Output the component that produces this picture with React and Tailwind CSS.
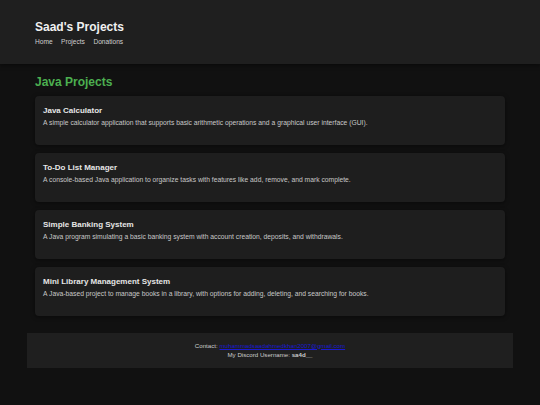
import React from "react";

const projects = [
  {
    title: "Java Calculator",
    desc: "A simple calculator application that supports basic arithmetic operations and a graphical user interface (GUI).",
  },
  {
    title: "To-Do List Manager",
    desc: "A console-based Java application to organize tasks with features like add, remove, and mark complete.",
  },
  {
    title: "Simple Banking System",
    desc: "A Java program simulating a basic banking system with account creation, deposits, and withdrawals.",
  },
  {
    title: "Mini Library Management System",
    desc: "A Java-based project to manage books in a library, with options for adding, deleting, and searching for books.",
  },
];

const App = () => {
  return (
    <div className="min-h-[405px] bg-[#111111] font-['Liberation_Sans',Arial,sans-serif] pb-9">
      {/* header */}
      <header className="bg-[#1f1f1f] px-[35px] pt-[20px] pb-[18px] shadow-[0_2px_4px_rgba(0,0,0,0.4)]">
        <h1 className="text-[12px] leading-[14px] font-bold text-[#f0f0f0]">
          Saad's Projects
        </h1>
        <nav className="mt-[3px] flex gap-[8.5px] text-[6.6px] leading-[9px] text-[#d0d0d0]">
          <a href="#">Home</a>
          <a href="#">Projects</a>
          <a href="#">Donations</a>
        </nav>
      </header>

      {/* projects */}
      <main className="px-[35px] pt-[11px]">
        <h2 className="text-[12px] leading-[14px] font-bold text-[#4caf50]">
          Java Projects
        </h2>
        <div className="mt-[7px] flex flex-col gap-[8.5px]">
          {projects.map((p) => (
            <div
              key={p.title}
              className="h-[48.5px] rounded-[4px] bg-[#1e1e1e] px-[8px] pt-[8px] shadow-[0_1px_4px_rgba(0,0,0,0.5)]"
            >
              <h3 className="text-[8px] leading-[13px] font-bold text-[#e6e6e6]">
                {p.title}
              </h3>
              <p className="text-[6.75px] leading-[11px] text-[#c8c8c8]">
                {p.desc}
              </p>
            </div>
          ))}
        </div>
      </main>

      {/* footer */}
      <footer className="mx-[27px] mt-[17px] bg-[#1f1f1f] py-[8px] text-center text-[6.15px] leading-[9.5px] text-[#cccccc]">
        <p>
          Contact:{" "}
          <a href="#" className="text-[#1a1ad0] underline">
            muhammadsaadahmedkhan2007@gmail.com
          </a>
        </p>
        <p>
          My Discord Username: <span className="font-bold">sa4d__</span>
        </p>
      </footer>
    </div>
  );
};

export default App;
